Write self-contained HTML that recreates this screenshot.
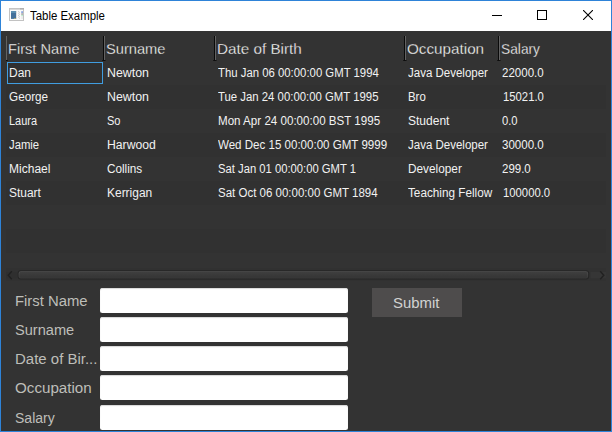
<!DOCTYPE html>
<html><head><meta charset="utf-8">
<style>
html,body{margin:0;padding:0;}
body{width:612px;height:432px;overflow:hidden;background:#333333;font-family:"Liberation Sans",sans-serif;position:relative;}
.abs{position:absolute;}
#frame{position:absolute;left:0;top:0;width:612px;height:432px;box-sizing:border-box;border:1px solid #2e83d8;pointer-events:none;}
#title{position:absolute;left:1px;top:1px;width:610px;height:30px;background:#fff;}
.row{position:absolute;left:6px;width:600px;height:24px;background:#313131;}
.x{position:absolute;white-space:nowrap;transform-origin:0 0;}
.t{font-size:12px;color:#000;line-height:14px;}
.hd{font-size:15px;color:#ffffff;line-height:18px;-webkit-text-stroke:0.3px #333;}
.c{font-size:12px;color:#f2f2f2;line-height:14px;}
.lbl{font-size:15.2px;color:#bebeb9;line-height:18px;}
.sub{font-size:15.2px;color:#d2d2d2;line-height:18px;}
.sepb{position:absolute;top:36px;width:1px;height:25px;background:#0a0a0a;}
.sepg{position:absolute;top:36px;width:1px;height:24px;background:#626262;}
.foot{position:absolute;top:60px;width:4px;height:1px;background:linear-gradient(90deg,#1c1c1c,#0c0c0c 30%,#101010 70%,#2a2a2a);}
.tf{position:absolute;left:100px;width:248px;height:25px;background:#fff;border-radius:2.5px;box-shadow:inset 0 1px 1px #d8d8d8;}
</style></head><body>
<div id="title">
 <svg class="abs" style="left:8px;top:7px" width="16" height="14" viewBox="9 8 16 14">
  <rect x="9.5" y="8.5" width="14" height="12" fill="#fbfbfb" stroke="#c2c2c2"/>
  <rect x="9" y="8" width="15" height="1.6" fill="#c4c4c4"/>
  <rect x="20" y="8" width="4" height="1.4" fill="#b0b0b0"/>
  <rect x="11" y="11.2" width="5.1" height="7.7" fill="#44719b"/>
  <rect x="11" y="11.2" width="5.1" height="1.8" fill="#5b8fb1"/>
  <rect x="14.3" y="18" width="1.3" height="0.9" fill="#d8c060"/>
  <rect x="16.4" y="11" width="0.6" height="8" fill="#d8d8d8"/>
  <path d="M18.3 11.3l1.4 1l-1.4 1l1.4 1l-1.4 1l1.4 1l-1.4 1l1.4 1" stroke="#a8a8a8" stroke-width="0.7" fill="none" stroke-dasharray="0.9 0.5"/>
  <rect x="21.2" y="11.2" width="1.8" height="1.9" fill="#8aa6e0"/>
  <rect x="21.2" y="13.1" width="1.8" height="1.9" fill="#b4b4b4"/>
  <rect x="21.2" y="15" width="1.8" height="0.8" fill="#a8ecc0"/>
  <rect x="21.2" y="16" width="1.8" height="3" fill="#ececec"/>
 </svg>
 <svg class="abs" style="left:491px;top:14px" width="10" height="1"><rect width="10" height="1" fill="#000"/></svg>
 <svg class="abs" style="left:536px;top:9px" width="10" height="10"><rect x="0.5" y="0.5" width="9" height="9" fill="none" stroke="#000"/></svg>
 <svg class="abs" style="left:582px;top:9px" width="10" height="10"><path d="M0 0L10 10M10 0L0 10" stroke="#000" stroke-width="1.1"/></svg>
</div>
<!-- header separators -->
<div class="sepg" style="left:6px"></div><div class="foot" style="left:6px;width:2px"></div>
<div class="sepb" style="left:103px"></div><div class="sepg" style="left:104px"></div><div class="foot" style="left:102px"></div>
<div class="sepb" style="left:214px"></div><div class="sepg" style="left:215px"></div><div class="foot" style="left:213px"></div>
<div class="sepb" style="left:404px"></div><div class="sepg" style="left:405px"></div><div class="foot" style="left:403px"></div>
<div class="sepb" style="left:498px"></div><div class="sepg" style="left:499px"></div><div class="foot" style="left:497px"></div>
<!-- stripes -->
<div class="row" style="top:85px"></div>
<div class="row" style="top:133px"></div>
<div class="row" style="top:181px"></div>
<div class="row" style="top:229px"></div>
<!-- focused cell -->
<div class="abs" style="left:7px;top:62px;width:94px;height:20px;border:1px solid #409de0;background:#303030"></div>
<!-- scrollbar -->
<div class="abs" style="left:6px;top:268px;width:600px;height:13px;background:#313131"></div>
<svg class="abs" style="left:0;top:262px" width="612" height="24" viewBox="0 262 612 24">
 <defs><linearGradient id="tg" x1="0" y1="0" x2="0" y2="1"><stop offset="0" stop-color="#3e3e3e"/><stop offset="1" stop-color="#353535"/></linearGradient><linearGradient id="hg" x1="0" y1="0" x2="0" y2="1"><stop offset="0" stop-color="#505050"/><stop offset="1" stop-color="#393939"/></linearGradient></defs>
 <rect x="6" y="272" width="10.5" height="6.3" fill="#2f2f2f"/>
 <rect x="590.5" y="272" width="15.5" height="6.3" fill="#363636"/>
 <path d="M11.8 271.2L8.2 275.2L11.8 279.2" stroke="#212121" stroke-width="1.4" fill="none"/>
 <path d="M600.2 271.2L603.8 275.2L600.2 279.2" stroke="#212121" stroke-width="1.4" fill="none"/>
 <rect x="17.6" y="270.2" width="571.5" height="9.3" rx="3" fill="#262626"/>
 <rect x="18.6" y="271.2" width="569.5" height="7.3" rx="2.2" fill="url(#hg)"/>
 <rect x="19.5" y="272.1" width="567.7" height="5.6" rx="1.4" fill="url(#tg)"/>
</svg>
<!-- form -->
<div class="tf" style="top:288px"></div>
<div class="tf" style="top:317px"></div>
<div class="tf" style="top:346px"></div>
<div class="tf" style="top:375px"></div>
<div class="tf" style="top:405px"></div>
<div class="abs" style="left:372px;top:288px;width:90px;height:29px;background:#4e4c4c"></div>
<!-- texts -->
<div class="x c" id="c0_0" style="left:9.45px;top:66px;transform:scaleX(0.9954)">Dan</div>
<div class="x c" id="c0_1" style="left:9.04px;top:90px;transform:scaleX(0.9778)">George</div>
<div class="x c" id="c0_2" style="left:9.38px;top:114px;transform:scaleX(0.9113)">Laura</div>
<div class="x c" id="c0_3" style="left:8.59px;top:138px;transform:scaleX(0.9413)">Jamie</div>
<div class="x c" id="c0_4" style="left:9.20px;top:162px;transform:scaleX(1.0021)">Michael</div>
<div class="x c" id="c0_5" style="left:8.89px;top:186px;transform:scaleX(0.9956)">Stuart</div>
<div class="x c" id="c1_0" style="left:106.65px;top:66px;transform:scaleX(1.0301)">Newton</div>
<div class="x c" id="c1_1" style="left:106.65px;top:90px;transform:scaleX(1.0301)">Newton</div>
<div class="x c" id="c1_2" style="left:106.54px;top:114px;transform:scaleX(0.9199)">So</div>
<div class="x c" id="c1_3" style="left:106.57px;top:138px;transform:scaleX(1.0177)">Harwood</div>
<div class="x c" id="c1_4" style="left:106.59px;top:162px;transform:scaleX(0.9786)">Collins</div>
<div class="x c" id="c1_5" style="left:106.67px;top:186px;transform:scaleX(0.9970)">Kerrigan</div>
<div class="x c" id="c2_0" style="left:218.48px;top:66px;transform:scaleX(0.9465)">Thu Jan 06 00:00:00 GMT 1994</div>
<div class="x c" id="c2_1" style="left:218.48px;top:90px;transform:scaleX(0.9469)">Tue Jan 24 00:00:00 GMT 1995</div>
<div class="x c" id="c2_2" style="left:217.95px;top:114px;transform:scaleX(0.9657)">Mon Apr 24 00:00:00 BST 1995</div>
<div class="x c" id="c2_3" style="left:218.20px;top:138px;transform:scaleX(0.9626)">Wed Dec 15 00:00:00 GMT 9999</div>
<div class="x c" id="c2_4" style="left:218.37px;top:162px;transform:scaleX(0.9372)">Sat Jan 01 00:00:00 GMT 1</div>
<div class="x c" id="c2_5" style="left:218.27px;top:186px;transform:scaleX(0.9587)">Sat Oct 06 00:00:00 GMT 1894</div>
<div class="x c" id="c3_0" style="left:407.71px;top:66px;transform:scaleX(0.9586)">Java Developer</div>
<div class="x c" id="c3_1" style="left:408.22px;top:90px;transform:scaleX(0.9492)">Bro</div>
<div class="x c" id="c3_2" style="left:407.75px;top:114px;transform:scaleX(1.0019)">Student</div>
<div class="x c" id="c3_3" style="left:407.71px;top:138px;transform:scaleX(0.9586)">Java Developer</div>
<div class="x c" id="c3_4" style="left:408.10px;top:162px;transform:scaleX(0.9838)">Developer</div>
<div class="x c" id="c3_5" style="left:407.78px;top:186px;transform:scaleX(0.9783)">Teaching Fellow</div>
<div class="x c" id="c4_0" style="left:501.93px;top:66px;transform:scaleX(0.9612)">22000.0</div>
<div class="x c" id="c4_1" style="left:502.78px;top:90px;transform:scaleX(0.9418)">15021.0</div>
<div class="x c" id="c4_2" style="left:502.09px;top:114px;transform:scaleX(0.9349)">0.0</div>
<div class="x c" id="c4_3" style="left:501.99px;top:138px;transform:scaleX(0.9621)">30000.0</div>
<div class="x c" id="c4_4" style="left:502.08px;top:162px;transform:scaleX(0.9570)">299.0</div>
<div class="x c" id="c4_5" style="left:502.78px;top:186px;transform:scaleX(0.9418)">100000.0</div>
<div class="x hd" id="h0" style="left:8.39px;top:40px;transform:scaleX(0.9752)">First Name</div>
<div class="x hd" id="h1" style="left:105.76px;top:40px;transform:scaleX(0.9772)">Surname</div>
<div class="x hd" id="h2" style="left:217.13px;top:40px;transform:scaleX(1.0171)">Date of Birth</div>
<div class="x hd" id="h3" style="left:406.94px;top:40px;transform:scaleX(1.0161)">Occupation</div>
<div class="x hd" id="h4" style="left:500.75px;top:40px;transform:scaleX(0.9168)">Salary</div>
<div class="x t" id="ttl" style="left:29.80px;top:9px;transform:scaleX(0.9514)">Table Example</div>
<div class="x lbl" id="l0" style="left:14.81px;top:292px;transform:scaleX(0.9773)">First Name</div>
<div class="x lbl" id="l1" style="left:15.35px;top:321px;transform:scaleX(0.9609)">Surname</div>
<div class="x lbl" id="l2" style="left:15.10px;top:350px;transform:scaleX(0.9865)">Date of Bir...</div>
<div class="x lbl" id="l3" style="left:15.22px;top:379px;transform:scaleX(0.9988)">Occupation</div>
<div class="x lbl" id="l4" style="left:14.50px;top:409px;transform:scaleX(0.9219)">Salary</div>
<div class="x sub" id="sub" style="left:393.46px;top:294px;transform:scaleX(0.9820)">Submit</div>
<div id="frame"></div>
</body></html>
